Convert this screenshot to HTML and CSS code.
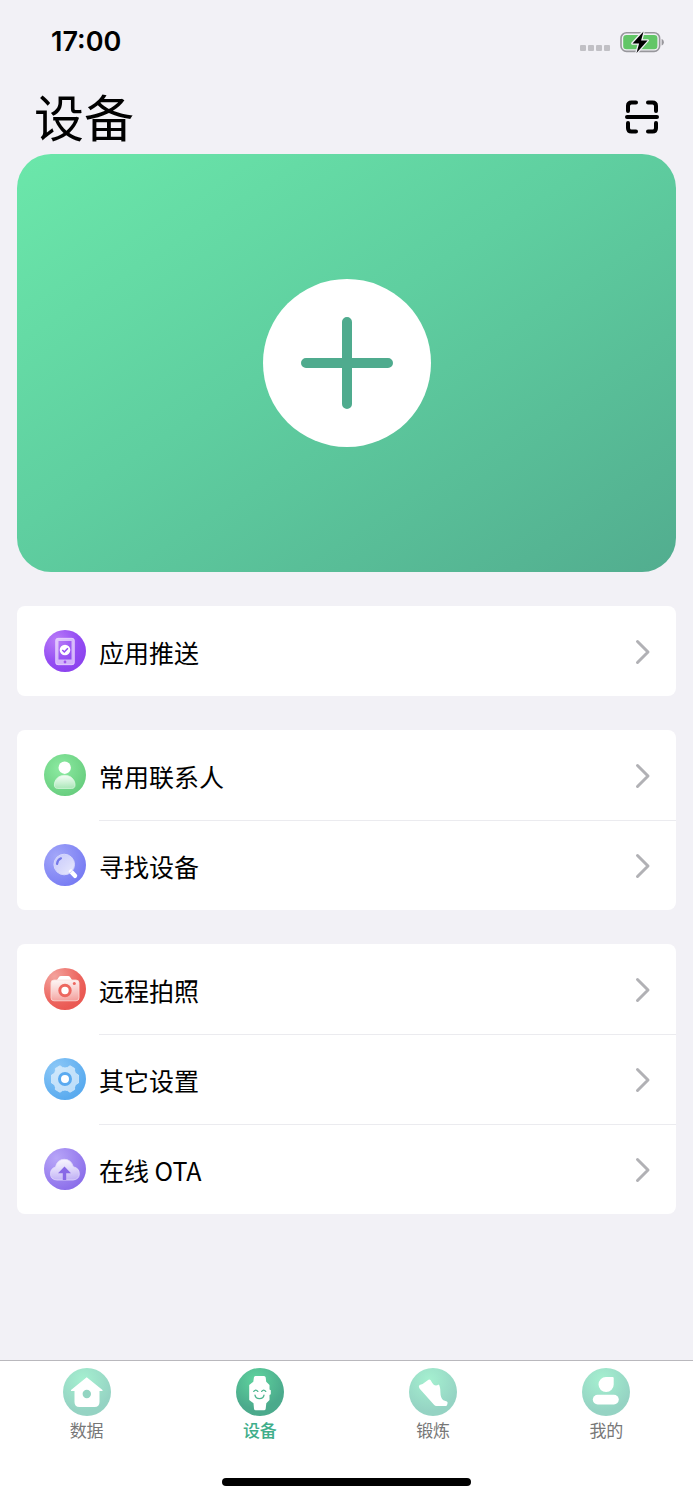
FILE: index.html
```html
<!DOCTYPE html>
<html lang="zh-CN">
<head>
<meta charset="utf-8">
<meta name="viewport" content="width=device-width, initial-scale=1">
<title>设备</title>
<link rel="stylesheet" href="styles.css">
</head>
<body>
<div class="app">
  <div class="status">
    <time class="clock">17:00</time>
    <div class="indicators">
      <span class="signal"><i></i><i></i><i></i><i></i></span>
      <svg class="battery" viewBox="0 0 44 24" aria-hidden="true">
        <rect x="1" y="2.8" width="38.6" height="18.6" rx="5.5" fill="none" stroke="#98979c" stroke-width="1.6"/>
        <rect x="3.2" y="5" width="34.2" height="14.2" rx="3.2" fill="#62c667"/>
        <path d="M41.6 9c3 .8 3 5.600 0 6.400z" fill="#98979c"/>
        <path d="M23.500 1.500 12.500 13.500h6.600l-2.600 9.500L27.600 10.500h-6.500z" fill="#000" stroke="#f2f1f6" stroke-width="2.600" paint-order="stroke" stroke-linejoin="round"/>
      </svg>
    </div>
  </div>

  <header class="header">
    <h1 class="title">设备</h1>
    <button class="scan" type="button" aria-label="扫一扫">
      <svg viewBox="0 0 34 34" fill="none" stroke="#000" stroke-width="4" stroke-linecap="round" stroke-linejoin="round" aria-hidden="true">
        <path d="M3 11V6q0-3.500 3.500-3.500H11M23 2.500h4.500Q31 2.500 31 6v5M3 23v5q0 3.500 3.500 3.500H11M23 31.500h4.500Q31 31.500 31 28v-5M2 17h30"/>
      </svg>
    </button>
  </header>

  <main class="content">
    <section class="hero">
      <button class="add" type="button" aria-label="添加设备">
        <svg viewBox="0 0 92 92" stroke="#4fab8e" stroke-width="10" stroke-linecap="round" aria-hidden="true"><path d="M46 5v82M5 46h82"/></svg>
      </button>
    </section>

    <nav class="group">
      <a class="row" href="#push">
        <svg class="icon" viewBox="0 0 42 42" aria-hidden="true">
          <defs>
            <radialGradient id="violet" cx=".3" cy=".25" r=".8"><stop offset="0" stop-color="#b97cf8"/><stop offset=".65" stop-color="#944df3"/><stop offset="1" stop-color="#8c43ee"/></radialGradient>
            <linearGradient id="glass" x1="0" y1="0" x2="0" y2="1"><stop offset="0" stop-color="#fff" stop-opacity=".9"/><stop offset="1" stop-color="#fff" stop-opacity=".4"/></linearGradient>
          </defs>
          <circle cx="21" cy="21" r="21" fill="url(#violet)"/>
          <path fill-rule="evenodd" d="M14 8h14q2.500 0 2.500 2.500v22q0 2.500-2.500 2.500H14q-2.500 0-2.500-2.500v-22Q11.500 8 14 8zm.500 3v18.500h13V11z" fill="#fff" fill-opacity=".58"/>
          <path d="M14 8.300h14q2.200 0 2.200 2.200v22q0 2.200-2.200 2.200H14q-2.200 0-2.200-2.200v-22q0-2.200 2.200-2.200z" fill="none" stroke="#e6cfff" stroke-width=".8"/>
          <circle cx="21" cy="20" r="5.300" fill="#fff"/>
          <path d="m18.300 20 2 2 3.600-3.800" fill="none" stroke="#944df3" stroke-width="1.500"/>
          <circle cx="21" cy="32" r="1.400" fill="#a052ee"/>
        </svg>
        <span class="body"><span class="label">应用推送</span><svg class="chevron" viewBox="0 0 16 26" aria-hidden="true"><path d="m2.500 2.500 10.500 10.500L2.500 23.500"/></svg></span>
      </a>
    </nav>

    <nav class="group">
      <a class="row" href="#contacts">
        <svg class="icon" viewBox="0 0 42 42" aria-hidden="true">
          <defs><radialGradient id="green" cx=".4" cy=".35" r=".7"><stop offset="0" stop-color="#8deba2"/><stop offset="1" stop-color="#66cc7d"/></radialGradient></defs>
          <circle cx="21" cy="21" r="21" fill="url(#green)"/>
          <circle cx="20.700" cy="13.700" r="6.200" fill="#fff"/>
          <path d="M20.700 21.300c6 0 10.300 4.200 10.300 9.700 0 2.400-1.200 3.400-3.300 3.400h-14c-2.100 0-3.300-1-3.300-3.400 0-5.500 4.300-9.700 10.300-9.700z" fill="url(#glass)" stroke="#d9f8df" stroke-width=".8"/>
        </svg>
        <span class="body"><span class="label">常用联系人</span><svg class="chevron" viewBox="0 0 16 26" aria-hidden="true"><path d="m2.500 2.500 10.500 10.500L2.500 23.500"/></svg></span>
      </a>
      <a class="row" href="#find">
        <svg class="icon" viewBox="0 0 42 42" aria-hidden="true">
          <defs>
            <radialGradient id="indigo" cx=".3" cy=".3" r=".75"><stop offset="0" stop-color="#a3a7f9"/><stop offset="1" stop-color="#787cf3"/></radialGradient>
            <linearGradient id="lens" x1="0" y1="0" x2="1" y2="1"><stop offset="0" stop-color="#fff" stop-opacity=".4"/><stop offset="1" stop-color="#fff" stop-opacity=".85"/></linearGradient>
          </defs>
          <circle cx="21" cy="21" r="21" fill="url(#indigo)"/>
          <path d="m27 27.500 4 4.300" stroke="#fff" stroke-width="4.400" stroke-linecap="round"/>
          <circle cx="20.200" cy="20.500" r="10.300" fill="url(#lens)" stroke="#d6d8fd" stroke-width="1"/>
          <path d="M13 20q.500-4.200 4-5.700" fill="none" stroke="#7478ea" stroke-width="2.200" stroke-linecap="round"/>
        </svg>
        <span class="body"><span class="label">寻找设备</span><svg class="chevron" viewBox="0 0 16 26" aria-hidden="true"><path d="m2.500 2.500 10.500 10.500L2.500 23.500"/></svg></span>
      </a>
    </nav>

    <nav class="group">
      <a class="row" href="#camera">
        <svg class="icon" viewBox="0 0 42 42" aria-hidden="true">
          <defs><radialGradient id="red" cx=".25" cy=".2" r=".8"><stop offset="0" stop-color="#f3a29c"/><stop offset=".75" stop-color="#ec655f"/><stop offset="1" stop-color="#ea5953"/></radialGradient></defs>
          <circle cx="21" cy="21" r="21" fill="url(#red)"/>
          <path d="m13 12 1.800-2.800q.700-1.200 2.200-1.200h7q1.500 0 2.200 1.200L28 12z" fill="#fff"/>
          <rect x="7" y="12" width="28" height="20.800" rx="3" fill="url(#glass)" stroke="#fbdeda" stroke-width=".8"/>
          <circle cx="21" cy="22.500" r="5.200" fill="#fff" stroke="#ed675f" stroke-width="3"/>
          <circle cx="30.300" cy="15.500" r="1.500" fill="#ed675f"/>
        </svg>
        <span class="body"><span class="label">远程拍照</span><svg class="chevron" viewBox="0 0 16 26" aria-hidden="true"><path d="m2.500 2.500 10.500 10.500L2.500 23.500"/></svg></span>
      </a>
      <a class="row" href="#settings">
        <svg class="icon" viewBox="0 0 42 42" aria-hidden="true">
          <defs><radialGradient id="blue" cx=".3" cy=".25" r=".75"><stop offset="0" stop-color="#8cc8f7"/><stop offset="1" stop-color="#5aabef"/></radialGradient></defs>
          <circle cx="21" cy="21" r="21" fill="url(#blue)"/>
          <path d="M16 7.700q2.200 2.200 5 2.200t5-2.200l4.600 2.700q-.700 4.900 3.900 6.600v8q-4.600 1.700-3.900 6.600L26 34.300q-2.200-2.200-5-2.200t-5 2.200l-4.600-2.700q.700-4.900-3.900-6.600v-8q4.600-1.700 3.900-6.600z" fill="#fff" fill-opacity=".58" stroke="#d9edfd" stroke-width=".7" stroke-linejoin="round"/>
          <circle cx="21" cy="21" r="5.500" fill="#fff" stroke="#5aaaf0" stroke-width="3"/>
        </svg>
        <span class="body"><span class="label">其它设置</span><svg class="chevron" viewBox="0 0 16 26" aria-hidden="true"><path d="m2.500 2.500 10.500 10.500L2.500 23.500"/></svg></span>
      </a>
      <a class="row" href="#ota">
        <svg class="icon" viewBox="0 0 42 42" aria-hidden="true">
          <defs><radialGradient id="purple" cx=".3" cy=".25" r=".8"><stop offset="0" stop-color="#b8a6f8"/><stop offset="1" stop-color="#8b6eea"/></radialGradient></defs>
          <circle cx="21" cy="21" r="21" fill="url(#purple)"/>
          <path d="M13 32q-6.500-.300-6.500-6.300 0-5.200 5-6.700Q13.300 11.300 20.300 11.300q6.900 0 9 7.500 6 1.200 6 7 0 5.600-6.300 6.200z" fill="url(#glass)" stroke="#e3dcfd" stroke-width=".8"/>
          <path d="M20.500 18.500 27 25.300h-4.800V32h-3.400v-6.700H14z" fill="#8869e6"/>
        </svg>
        <span class="body"><span class="label">在线 OTA</span><svg class="chevron" viewBox="0 0 16 26" aria-hidden="true"><path d="m2.500 2.500 10.500 10.500L2.500 23.500"/></svg></span>
      </a>
    </nav>
  </main>

  <footer class="tabbar">
    <nav class="tabs">
      <a class="tab" href="#data">
        <svg class="tab-icon" viewBox="0 0 48 48" aria-hidden="true">
          <defs><radialGradient id="mint" cx=".42" cy=".25" r=".65"><stop offset="0" stop-color="#a5f0d0"/><stop offset="1" stop-color="#95d3c3"/></radialGradient></defs>
          <circle cx="24" cy="24" r="24" fill="url(#mint)"/>
          <path d="M23.700 9.300 39.500 22v1h-3v11q0 5-5 5h-15q-5 0-5-5V23H8v-1z" fill="#fff"/>
          <circle cx="23.800" cy="26" r="4.200" fill="#93d5c2"/>
        </svg>
        <span>数据</span>
      </a>
      <a class="tab tab-active" href="#device" aria-current="page">
        <svg class="tab-icon" viewBox="0 0 48 48" aria-hidden="true">
          <defs><radialGradient id="emerald" cx=".42" cy=".25" r=".6"><stop offset="0" stop-color="#5fd49e"/><stop offset="1" stop-color="#4baa8c"/></radialGradient></defs>
          <circle cx="24" cy="24" r="24" fill="url(#emerald)"/>
          <path d="M19.500 8H28q1.500 0 1.700 1.500l.500 4.300 3.300 3.200v4.500l1.300.800v4l-1.300.700V32l-3.200 3.200-.600 5.500q-.200 1.500-1.700 1.500h-8.300q-1.500 0-1.700-1.500l-.500-5.500L13.200 32V17l4.100-3.200.600-4.300Q18 8 19.500 8z" fill="#fff"/>
          <path d="M17.800 23.400q2-2.600 4 0M25.700 23.400q2-2.600 4 0M19 27.200q.600 3.500 4.500 3.500t4.500-3.500" fill="none" stroke="#4bb48e" stroke-width="1.300" stroke-linecap="round"/>
        </svg>
        <span>设备</span>
      </a>
      <a class="tab" href="#workout">
        <svg class="tab-icon" viewBox="0 0 48 48" aria-hidden="true">
          <circle cx="24" cy="24" r="24" fill="url(#mint)"/>
          <path d="M10.500 17q3.500-.800 5.500-2.800l3.500-2.500q1.200-.700 2 .300 1.500 3 3.500 5 2.500 1 4.500-.500 1 .300 1.200 2 .800 2.500.700 5.500 0 6 3 8.300l3.500 1.200q1 .500.600 2-.300 2.500-1.700 2.500H27.500q-1.500 0-2.500-1.200L10.700 20.800Q9 18.500 10.500 17z" fill="#fff"/>
        </svg>
        <span>锻炼</span>
      </a>
      <a class="tab" href="#me">
        <svg class="tab-icon" viewBox="0 0 48 48" aria-hidden="true">
          <circle cx="24" cy="24" r="24" fill="url(#mint)"/>
          <path d="M24 8.900h6.500q1.200 0 1.200 1.200v6.300A7.600 7.600 0 1 1 24 8.900z" fill="#fff"/>
          <rect x="10.800" y="26.700" width="26" height="9.800" rx="4.900" fill="#fff"/>
        </svg>
        <span>我的</span>
      </a>
    </nav>
    <div class="home-indicator"></div>
  </footer>
</div>
</body>
</html>
```
FILE: styles.css
```css
* {
  box-sizing: border-box;
}

body {
  margin: 0;
  background: #f2f1f6;
  color: #000;
  font-family: "Noto Sans CJK SC", "Noto Sans", sans-serif;
}

a {
  color: inherit;
  text-decoration: none;
}

button {
  padding: 0;
  border: 0;
  background: none;
  cursor: pointer;
}

svg {
  display: block;
  flex: none;
}

.app {
  display: flex;
  flex-direction: column;
  min-height: 100vh;
}

.status {
  display: flex;
  align-items: center;
  justify-content: space-between;
  height: 84px;
  padding: 0 29px 0 51px;
}

.clock {
  font: 600 27px/32px Inter, sans-serif;
}

.indicators {
  display: flex;
  align-items: center;
  gap: 10px;
}

.signal {
  display: flex;
  gap: 2px;
  padding-top: 12px;
}

.signal i {
  width: 6px;
  height: 6px;
  border-radius: 1px;
  background: #c1c0c5;
}

.battery {
  width: 44px;
  height: 24px;
}

.header {
  display: flex;
  align-items: flex-start;
  justify-content: space-between;
  height: 66px;
  padding: 0 34px;
}

.title {
  margin: 0;
  font-size: 50px;
  font-weight: 400;
  line-height: 62px;
}

.scan {
  padding: 16px 0;
}

.scan svg {
  width: 34px;
  height: 34px;
}

.content {
  display: flex;
  flex: 1;
  flex-direction: column;
  gap: 34px;
  padding: 4px 17px 34px;
}

.hero {
  display: grid;
  place-items: center;
  aspect-ratio: 659 / 418;
  border-radius: 34px;
  background: linear-gradient(to bottom right, #6be7aa 0%, #5fcfa0 45%, #52ad8f 100%);
}

.add {
  display: grid;
  place-items: center;
  width: 168px;
  height: 168px;
  border-radius: 50%;
  background: #fff;
}

.add svg {
  width: 92px;
  height: 92px;
}

.group {
  overflow: hidden;
  border-radius: 8px;
  background: #fff;
}

.row {
  display: flex;
  align-items: center;
  gap: 13px;
  height: 90px;
  padding-left: 27px;
}

.icon {
  width: 42px;
  height: 42px;
}

.body {
  display: flex;
  flex: 1;
  align-items: center;
  justify-content: space-between;
  height: 100%;
  padding-right: 25px;
  border-top: 1px solid transparent;
}

.row + .row .body {
  border-top-color: #ebebef;
}

.label {
  font-size: 25px;
  line-height: 36px;
}

.chevron {
  width: 16px;
  height: 26px;
  fill: none;
  stroke: #b1b1b5;
  stroke-width: 3;
  stroke-linecap: round;
  stroke-linejoin: round;
}

.tabbar {
  display: flex;
  flex-direction: column;
  align-items: center;
  justify-content: space-between;
  height: 140px;
  padding: 7px 0 14px;
  border-top: 1px solid #b9b8bd;
  background: #fff;
}

.tabs {
  display: flex;
  width: 100%;
}

.tab {
  display: flex;
  flex: 1;
  flex-direction: column;
  align-items: center;
  gap: 2px;
  color: #777;
  font-size: 17px;
  font-weight: 400;
  line-height: 24px;
}

.tab-active {
  color: #3fae8a;
  font-weight: 500;
}

.tab-icon {
  width: 48px;
  height: 48px;
}

.home-indicator {
  width: 36%;
  height: 8px;
  border-radius: 4px;
  background: #000;
}
```
